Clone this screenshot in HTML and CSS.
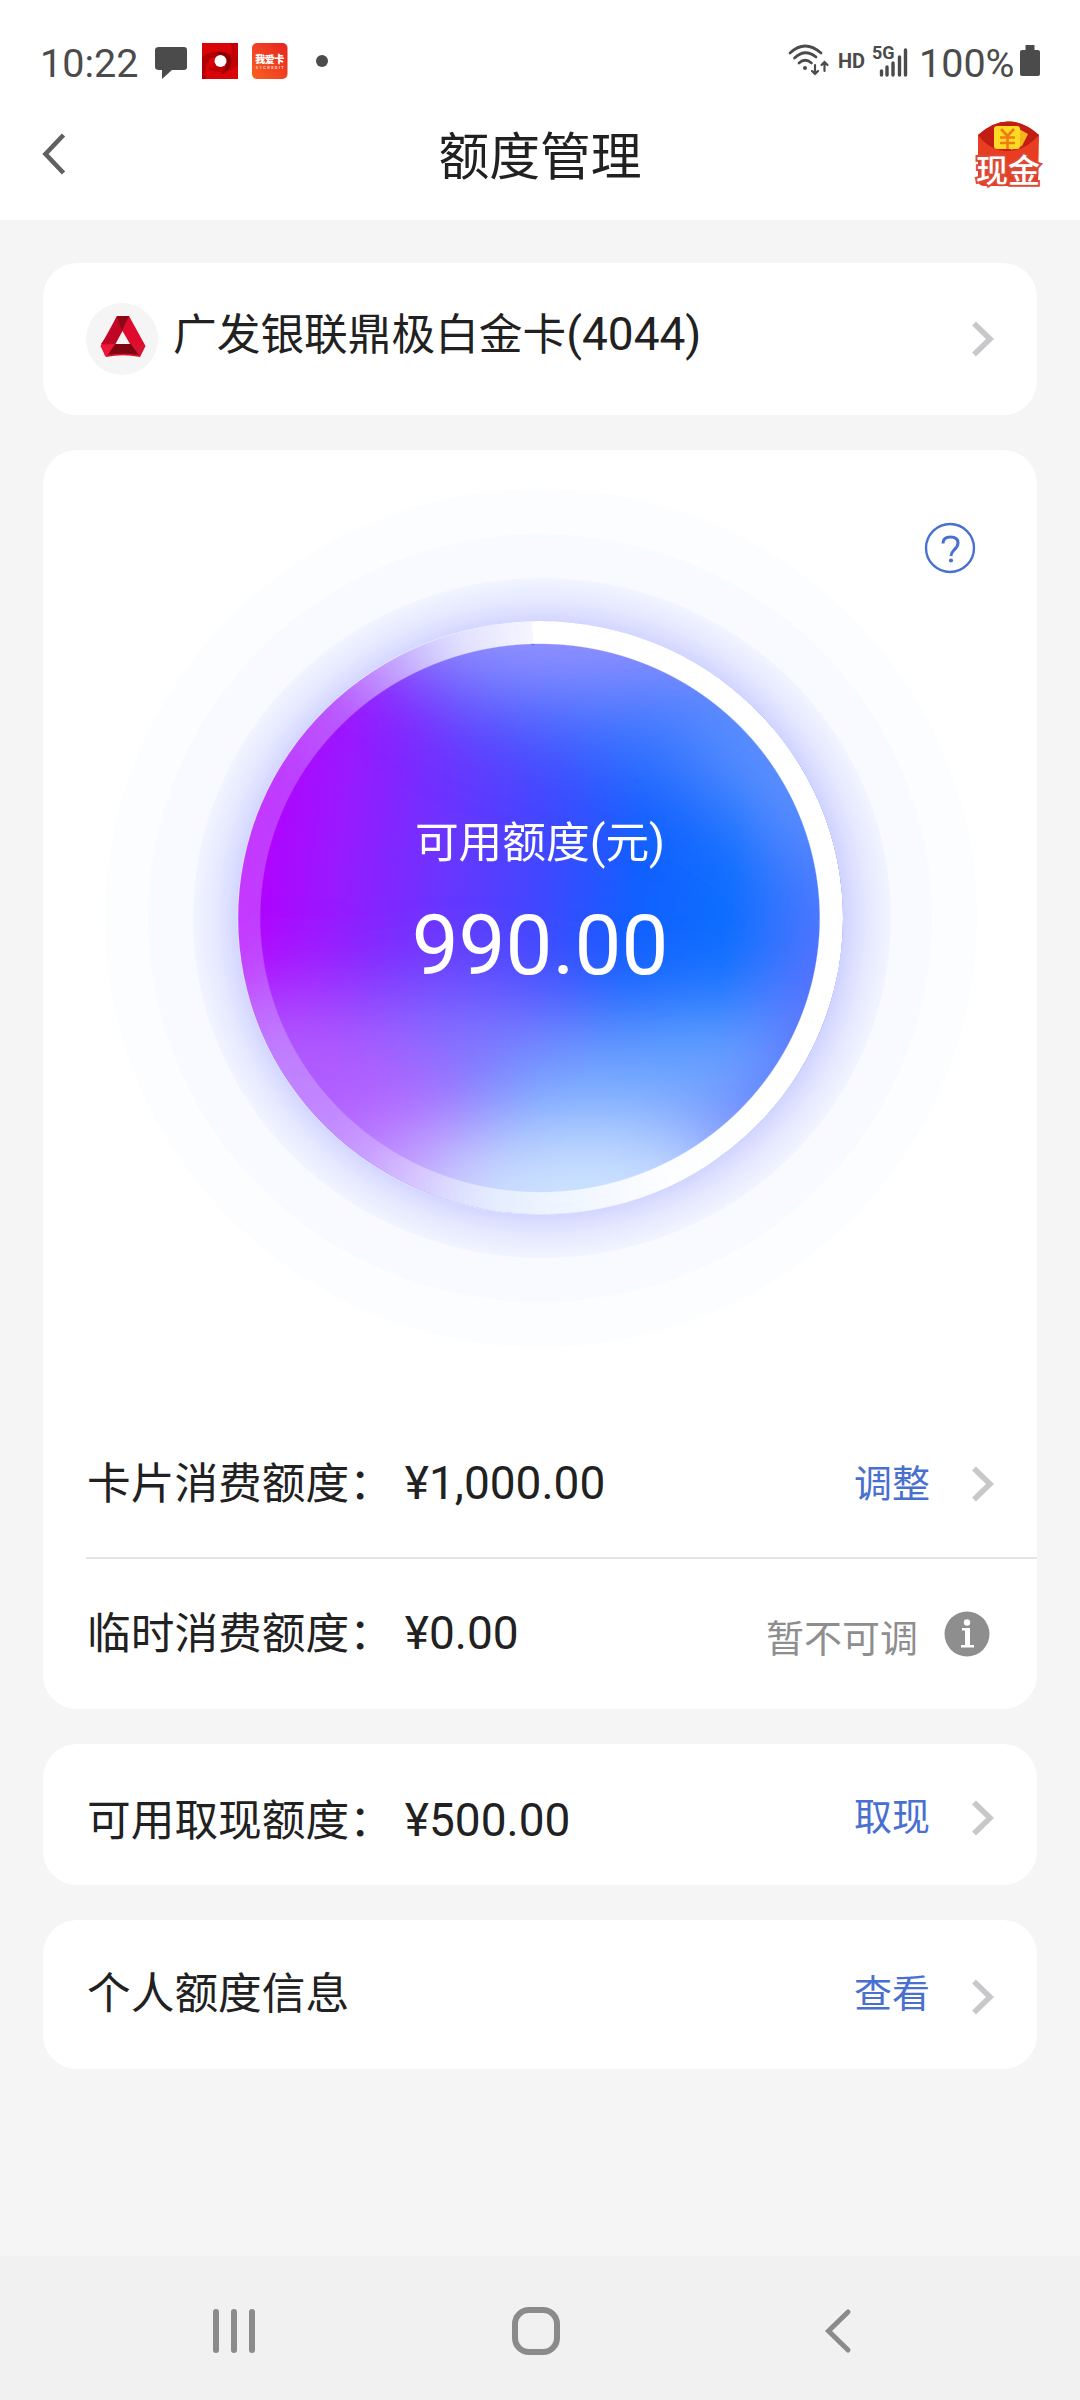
FILE: index.html
```html
<!DOCTYPE html>
<html lang="zh-CN">
<head>
<meta charset="utf-8">
<title>额度管理</title>
<link rel="stylesheet" href="styles.css">
</head>
<body>
<div class="statusbar">
  <span class="clock">10:22</span>
  <svg class="st-msg" width="34" height="34" viewBox="0 0 34 34"><path d="M4 0H29Q32 0 32 3V20Q32 23 29 23H17L7 32V23H4Q0 23 0 20V3Q0 0 4 0Z" fill="#4b4b4b"/></svg>
  <svg class="st-app" width="36" height="36" viewBox="0 0 36 36"><rect width="36" height="36" fill="#d90408"/><path d="M0 14Q14 4 30 12L24 18Q16 10 8 16Q2 22 4 36H0Z" fill="#b00004"/><path d="M36 22Q22 34 6 26L12 20Q22 26 28 16Q32 8 28 0H36Z" fill="#c00005"/><path d="M10 12Q22 4 29 15Q30 28 19 31Q26 25 24 17Q18 8 10 12Z" fill="#8b0003"/><circle cx="18.500" cy="18" r="6" fill="#fff"/></svg>
  <svg class="st-card" width="36" height="36" viewBox="0 0 36 36"><defs><linearGradient id="card" x1="1" y1="0" x2="0" y2="1"><stop offset="0" stop-color="#e62320"/><stop offset="1" stop-color="#fa6020"/></linearGradient></defs><rect width="35.500" height="36" rx="5" fill="url(#card)"/><text x="17.800" y="20" class="card-name" textLength="29">我爱卡</text><text x="17.800" y="26" class="card-sub" textLength="28">51CREDIT</text></svg>
  <span class="dot"></span>
  <span class="spacer"></span>
  <svg class="st-wifi" width="41" height="32" viewBox="0 0 41 32" fill="none" stroke="#4b4b4b" stroke-width="2.700" stroke-linecap="round"><path d="M2 9Q17-5 33 9M6.500 14Q17 4 28 13M11 19Q17 13.500 23.500 19"/><circle cx="17" cy="24" r="2" fill="#4b4b4b" stroke="none"/><path d="M27 21V30M24 27L27 30L30 27M36.500 27V18M33.500 21L36.500 18L39.500 21" stroke-width="2.200"/></svg>
  <span class="hd">HD</span>
  <svg class="st-signal" width="36" height="36" viewBox="0 -2 36 36"><text x="0" y="13.500" class="fiveg">5G</text><path d="M9.500 26V30M15 22V30M21 18V30M27.500 12V30M33.500 5V30" stroke="#4b4b4b" stroke-width="3.400" stroke-linecap="round"/></svg>
  <span class="percent">100%</span>
  <svg class="st-batt" width="20" height="32" viewBox="0 0 20 32"><path d="M5.500 0H14.500V5H18Q20 5 20 7V29Q20 31 18 31H2Q0 31 0 29V7Q0 5 2 5H5.500Z" fill="#4b4b4b"/></svg>
</div>
<header class="header">
  <svg width="24" height="42" viewBox="0 0 24 42"><path d="M22.500 2L4.500 21L22.500 40" fill="none" stroke="#606060" stroke-width="4.600"/></svg>
  <h1>额度管理</h1>
  <svg width="66" height="68" viewBox="0 0 66 68"><path d="M3 15Q33-12 64 15L63 62Q62 66 56 66H10Q3 66 3 60Z" fill="#e93d22"/><path d="M3 15Q33-12 64 15Q50 31 33 31Q15 31 3 15Z" fill="#c21d12"/><path d="M44 9L53 14L47 26L36 30Z" fill="#f7b51d"/><rect x="19" y="6" width="26" height="23" rx="3" fill="#fddb25"/><path d="M26 9L32.500 16L39 9M32.500 16V29M25 17.500H40M25 23H40" stroke="#ef7b13" stroke-width="2.600" fill="none"/><text x="33" y="62" class="cash">现金</text></svg>
</header>
<main class="page">
  <section class="card bank">
    <svg width="72" height="72" viewBox="0 0 72 72"><circle cx="36" cy="36" r="36" fill="#f5f5f5"/><path d="M31 13H43L59.500 43L54 54Q37 50.500 20 54L14.500 43Z" fill="#df0a2c"/><path d="M31 13H43L38 23L35 31L30 24Z" fill="#8c0714"/><path d="M31 13L36 28L30 41H15L23 30Z" fill="#c00626"/><path d="M29 41H45L53 52Q37 49 21 52Z" fill="#7c0612"/><path d="M15 42L29 41L21 53H19Z" fill="#ee1738"/><path d="M45 41L59 42L54 53Z" fill="#d51531"/><path d="M36.500 28L44 41H29.500Z" fill="#f5f5f5"/></svg>
    <span class="label">广发银联鼎极白金卡<b>(4044)</b></span>
    <svg class="chev" width="24" height="36" viewBox="0 0 24 36"><path d="M3 2.500L19 18L3 33.500" fill="none" stroke="#c8c8ca" stroke-width="5.600"/></svg>
  </section>
  <section class="card limits">
    <div class="gauge">
      <svg class="disc" width="994" height="930" viewBox="43 450 994 930">
        <defs>
          <radialGradient id="glow"><stop offset=".84" stop-color="#c9cbff"/><stop offset=".89" stop-color="#d9dcff"/><stop offset=".94" stop-color="#e7eaff"/><stop offset="1" stop-color="#f2f4ff"/></radialGradient>
          <linearGradient id="base" gradientUnits="userSpaceOnUse" x1="250" y1="870" x2="830" y2="940"><stop offset="0" stop-color="#b400ff"/><stop offset=".14" stop-color="#9a18ff"/><stop offset=".33" stop-color="#6a35ff"/><stop offset=".5" stop-color="#4048ff"/><stop offset=".66" stop-color="#1260ff"/><stop offset=".82" stop-color="#0f6eff"/><stop offset="1" stop-color="#5078ff"/></linearGradient>
          <clipPath id="round"><ellipse cx="540.500" cy="918" rx="302.300" ry="296.300"/></clipPath>
          <filter id="soft" x="-80%" y="-150%" width="260%" height="400%"><feGaussianBlur stdDeviation="40"/></filter>
        </defs>
        <ellipse cx="541" cy="918" rx="436" ry="429" fill="#fcfdff"/>
        <ellipse cx="540" cy="918" rx="392" ry="384" fill="#f8faff"/>
        <ellipse cx="542" cy="918" rx="349" ry="340" fill="url(#glow)"/>
        <g clip-path="url(#round)">
          <rect x="230" y="610" width="620" height="615" fill="url(#base)"/>
          <g filter="url(#soft)">
            <path d="M400 560H900V850L760 820L600 755L470 715L420 675Z" fill="#4a80ff" opacity=".85"/>
            <ellipse cx="560" cy="620" rx="210" ry="55" fill="#9a94ff"/>
            <ellipse cx="775" cy="770" rx="45" ry="120" fill="#6092ff" transform="rotate(-32 775 770)"/>
            <path d="M200 1050L330 1005L470 985L620 1015L800 1010V1300H200Z" fill="#8a7cff" opacity=".85"/>
            <ellipse cx="340" cy="1100" rx="150" ry="80" fill="#b05cff" transform="rotate(38 340 1100)"/>
            <ellipse cx="640" cy="1080" rx="160" ry="62" fill="#6ea6ff" transform="rotate(-12 640 1080)"/>
            <ellipse cx="435" cy="1185" rx="105" ry="60" fill="#c496ff"/>
            <ellipse cx="585" cy="1205" rx="165" ry="75" fill="#cfe4ff"/>
            <ellipse cx="820" cy="1040" rx="28" ry="120" fill="#5c68ff" transform="rotate(24 820 1040)"/>
          </g>
        </g>
      </svg>
      <div class="ring"></div>
      <svg class="notch" width="4" height="26" viewBox="0 0 4 26"><circle cx="2" cy="2.500" r="1.500" fill="#a9a9dc"/><circle cx="2" cy="22.500" r="1.700" fill="#6468c0"/></svg>
      <div class="amount"><span class="caption">可用额度<b>(</b>元<b>)</b></span><strong>990.00</strong></div>
      <svg class="help" width="52" height="52" viewBox="0 0 52 52"><circle cx="26" cy="26" r="24" fill="none" stroke="#4870d0" stroke-width="2.400"/><path d="M19 21.500Q19 15 26.500 15Q34 15 34 21Q34 24.500 30 28Q27 31 27 34" fill="none" stroke="#4870d0" stroke-width="3"/><circle cx="27" cy="38.500" r="2.100" fill="#4870d0"/></svg>
    </div>
    <div class="row first">
      <span class="label">卡片消费额度：</span><span class="value">¥1,000.00</span>
      <a class="action">调整</a>
      <svg class="chev" width="24" height="36" viewBox="0 0 24 36"><path d="M3 2.500L19 18L3 33.500" fill="none" stroke="#c8c8ca" stroke-width="5.600"/></svg>
    </div>
    <div class="row second">
      <span class="label">临时消费额度：</span><span class="value">¥0.00</span>
      <span class="action muted">暂不可调</span>
      <svg class="info" width="46" height="46" viewBox="0 0 46 46"><circle cx="23" cy="23" r="22.500" fill="#8e8e8e"/><circle cx="23" cy="11.500" r="3.200" fill="#fff"/><path d="M18 17H26V34H30V36.500H17V34H21V19.500H18Z" fill="#fff"/></svg>
    </div>
  </section>
  <section class="card row cashout">
    <span class="label">可用取现额度：</span><span class="value">¥500.00</span>
    <a class="action">取现</a>
    <svg class="chev" width="24" height="36" viewBox="0 0 24 36"><path d="M3 2.500L19 18L3 33.500" fill="none" stroke="#c8c8ca" stroke-width="5.600"/></svg>
  </section>
  <section class="card row personal">
    <span class="label">个人额度信息</span>
    <a class="action">查看</a>
    <svg class="chev" width="24" height="36" viewBox="0 0 24 36"><path d="M3 2.500L19 18L3 33.500" fill="none" stroke="#c8c8ca" stroke-width="5.600"/></svg>
  </section>
</main>
<nav class="navbar">
  <svg width="44" height="50" viewBox="0 0 44 50"><path d="M4 6V44M22 6V44M40 6V44" stroke="#8b8b8b" stroke-width="6" stroke-linecap="round"/></svg>
  <svg width="50" height="50" viewBox="0 0 50 50"><rect x="4" y="4" width="42" height="42" rx="14" fill="none" stroke="#8b8b8b" stroke-width="6"/></svg>
  <svg width="38" height="50" viewBox="0 0 38 50"><path d="M33 6L13.500 25L33 44" fill="none" stroke="#8b8b8b" stroke-width="5" stroke-linecap="round"/></svg>
</nav>
</body>
</html>
```
FILE: styles.css
```css
* { box-sizing: border-box; }
body {
  margin: 0;
  width: 1080px;
  height: 2400px;
  display: flex;
  flex-direction: column;
  background: #f5f5f5;
  color: #212121;
  font-family: Roboto, "Noto Sans CJK SC", sans-serif;
}
svg { display: block; flex: none; overflow: visible; }
b { font-weight: 400; font-size: 46px; line-height: 1; }

.statusbar {
  height: 120px;
  padding: 0 40px 0 40px;
  display: flex;
  align-items: flex-start;
  background: #fff;
  color: #4b4b4b;
  font-size: 39.5px;
  line-height: 46px;
}
.clock { margin-top: 41px; width: 115px; }
.st-msg { margin-top: 47px; width: 34px; }
.st-app { margin: 43px 0 0 13px; }
.st-card { margin: 43px 0 0 14px; }
.card-name { font: 900 10px "Noto Sans CJK SC", sans-serif; fill: #fff; text-anchor: middle; }
.card-sub { font: 700 4px Roboto, sans-serif; fill: #ffd9cf; text-anchor: middle; }
.dot { width: 12px; height: 12px; border-radius: 50%; background: #4b4b4b; margin: 55px 0 0 28px; }
.spacer { flex: 1; }
.st-wifi { margin: 44px 9px 0 0; }
.hd { font-size: 20px; font-weight: 700; line-height: 24px; margin: 49px 7px 0 0; }
.st-signal { margin: 43px 11px 0 0; }
.fiveg { font: 700 18px Roboto, sans-serif; fill: #4b4b4b; }
.percent { margin-top: 41px; width: 101px; }
.st-batt { margin-top: 45px; }

.header {
  height: 100px;
  padding: 0 39px 0 41px;
  display: grid;
  grid-template-columns: 66px 1fr 66px;
  background: #fff;
}
.header svg:first-child { margin-top: 13px; }
.header h1 { margin: 0 0 0 -2px; font-size: 50.8px; font-weight: 400; line-height: 75px; text-align: center; }
.cash { font: 500 32px "Noto Sans CJK SC", sans-serif; fill: #fff; stroke: #dc4a35; stroke-width: 4px; paint-order: stroke; text-anchor: middle; }

.page { flex: 1; padding: 43px 43px 0; }
.card { background: #fff; border-radius: 34px; margin-bottom: 35px; }
.label { font-size: 43.7px; line-height: 60px; white-space: nowrap; }
.value { font-size: 46px; line-height: 60px; margin: -1px 0 0 12px; }
.chev { margin-left: 41px; }

.bank { height: 152px; padding: 40px 42px 0 43px; display: flex; }
.bank .label { margin: 2px 0 0 15px; flex: 1; }
.bank .chev { margin-top: 18px; }

.limits { height: 1259px; }
.gauge { display: grid; height: 957px; }
.gauge > * { grid-area: 1 / 1; }
.ring {
  width: 606px;
  height: 594px;
  margin: 171px 0 0 194px;
  border-radius: 50%;
  background: conic-gradient(from -1.5deg, #fff 0 135deg, #fffffff5 155deg, #ffffffa8 180deg, #ffffff66 200deg, #ffffff3d 218deg, #ffffff38 300deg, #ffffff4d 318deg, #ffffff85 334deg, #ffffffc0 346deg, #ffffffeb 360deg);
  -webkit-mask: radial-gradient(closest-side, transparent 92.1%, #000 92.5%);
  mask: radial-gradient(closest-side, transparent 92.1%, #000 92.5%);
}
.notch { margin: 171px 0 0 488px; }
.amount { display: flex; flex-direction: column; align-items: center; padding-top: 361px; color: #fff; }
.caption { font-size: 43.7px; line-height: 64px; }
.amount strong { font-weight: 400; font-size: 83.5px; line-height: 98px; margin-top: 22px; }
.help { margin: 72px 0 0 881px; }

.row { display: flex; padding: 0 42px 0 44px; }
.action { margin-left: auto; font-size: 38px; line-height: 54px; color: #4870d0; }
.first { height: 152px; margin-left: 43px; padding-left: 1px; padding-top: 47px; border-bottom: 2px solid #e5e5e5; }
.first .action { margin-top: 3px; }
.first .chev { margin-top: 12px; }
.second { padding-top: 45px; }
.second .action { margin-top: 8px; color: #8e8e8e; }
.info { margin: 7px 5px 0 26px; }
.cashout { height: 141px; padding-top: 47px; }
.cashout .action { margin-top: -1px; }
.cashout .chev { margin-top: 9px; }
.personal { height: 149px; padding-top: 44px; }
.personal .action { margin-top: 3px; }
.personal .chev { margin-top: 15px; }

.navbar {
  height: 144px;
  padding: 50px 227px 0 212px;
  display: flex;
  justify-content: space-between;
  background: #f1f1f1;
}
```
